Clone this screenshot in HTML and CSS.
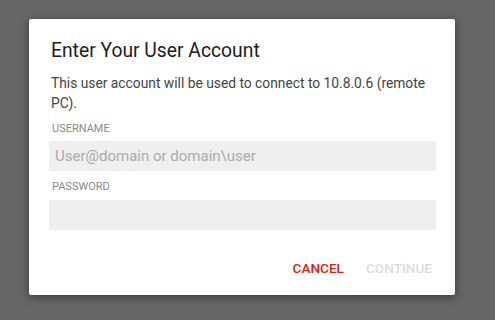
FILE: index.html
```html
<!DOCTYPE html>
<html lang="en">
<head>
  <meta charset="utf-8">
  <title>Enter Your User Account</title>
  <link rel="stylesheet" href="styles.css">
</head>
<body>

<div id="dialog">
  <div id="title">Enter Your User Account</div>
  <div id="message">This user account will be used to connect to 10.8.0.6 (remote PC).</div>

  <label class="fieldLabel" for="username">USERNAME</label>
  <input id="username" class="field" type="text" placeholder="User@domain or domain\user">

  <label class="fieldLabel second" for="password">PASSWORD</label>
  <input id="password" class="field" type="password">

  <div id="actions">
    <button class="btns cancel">CANCEL</button>
    <button class="btns" disabled>CONTINUE</button>
  </div>
</div>

</body>
</html>
```

FILE: styles.css
```css
html, body {
  margin: 0;
  height: 100%;
  background-color: #666666;
  font-family: Roboto, "Liberation Sans", sans-serif;
}

body {
  padding: 19px 0 0 29px;
  box-sizing: border-box;
}

#dialog {
  width: 426px;
  box-sizing: border-box;
  padding: 19px 19px 11px 20px;
  background-color: #ffffff;
  border-radius: 2px;
  box-shadow: 0 2px 10px rgba(0, 0, 0, 0.45);
  display: flex;
  flex-direction: column;
}

#title {
  font-size: 19.3px;
  line-height: 25px;
  color: #212121;
  padding-left: 2px;
}

#message {
  margin-top: 10px;
  font-size: 13.8px;
  line-height: 20px;
  color: #444444;
  padding-left: 2px;
  max-width: 380px;
}

.fieldLabel {
  margin-top: 9px;
  font-size: 11px;
  line-height: 14px;
  color: #8a8a8a;
  padding-left: 3px;
}

.field {
  margin-top: 5px;
  height: 30px;
  box-sizing: border-box;
  width: 100%;
  padding: 0 6px;
  border: none;
  outline: none;
  background-color: #efefef;
  font-family: Roboto, "Liberation Sans", sans-serif;
  font-size: 15px;
  color: #333333;
}

.field::placeholder {
  color: #ababab;
}

.second {
  margin-top: 9px;
}

.second + .field {
  margin-top: 6px;
}

#actions {
  margin-top: 22px;
  display: flex;
  justify-content: flex-end;
  gap: 14px;
}

.btns {
  padding: 6px 4px;
  border: none;
  background-color: transparent;
  font-family: Roboto, "Liberation Sans", sans-serif;
  font-size: 13.6px;
  font-weight: 500;
  line-height: 20px;
  color: #d9230f;
}

.btns:disabled {
  color: #dcdcdc;
}
```
